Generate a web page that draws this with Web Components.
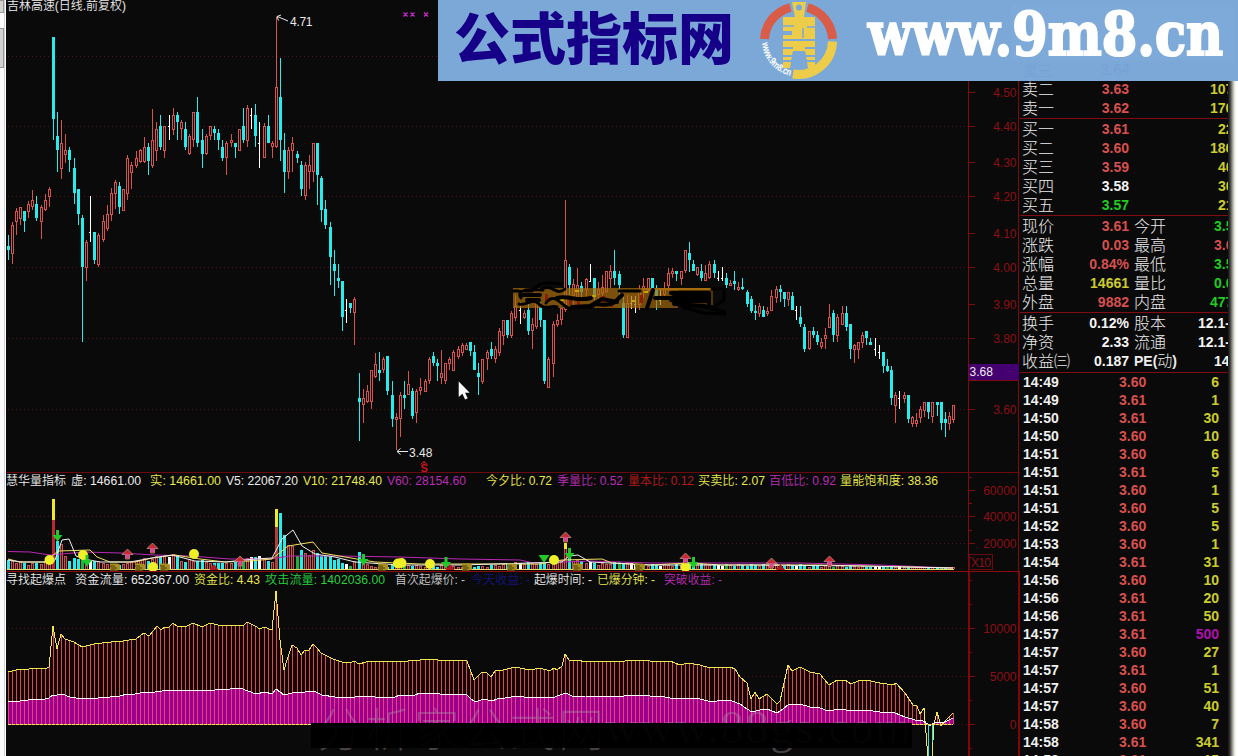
<!DOCTYPE html>
<html lang="zh">
<head>
<meta charset="utf-8">
<title>吉林高速</title>
<style>
    html, body {
        margin: 0;
        background: #0a0a0a;
        overflow: hidden;
    }
</style>
</head>
<body>
<stock-app></stock-app>

<script>
const CJK = '"Liberation Sans", "Noto Sans CJK SC", sans-serif'

// one line of text, squeezed or stretched to the width attribute
customElements.define('fit-text',

    class extends HTMLElement {

        constructor() {
            super()
            this.attachShadow({ mode: 'open' })
        }

        connectedCallback () {
            const w = this.getAttribute('w')
            const gap = this.getAttribute('gap') || 0
            this.shadowRoot.innerHTML = `
                <style>
                    :host { display: block; flex: none; width: ${w}px; height: 16px; margin-left: ${gap}px; }
                    svg { display: block; overflow: visible; }
                    text { font: 350 12px ${CJK}; fill: currentColor; }
                </style>
                <svg width="${w}" height="16">
                    <text x="0" y="12" textLength="${w}" lengthAdjust="spacingAndGlyphs">${this.textContent}</text>
                </svg>
            `
        }
    })

// kind, x, high, body top, body bottom, low
const CANDLES = `
c 8 235 246 250 260;r 12 222 225 254 264;r 16 208 211 222 235;r 20 207 207 219 225;c 24 211 211 221 232;r 28 201 204 212 218
r 32 190 200 207 210;c 36 196 204 218 221;r 41 205 207 222 239;r 45 194 200 210 211;r 49 187 189 197 207;c 53 37 37 119 140
c 57 112 136 150 172;r 61 120 143 169 179;r 65 134 150 155 163;c 69 147 150 160 172;c 74 158 168 193 204;c 78 189 189 214 225
c 82 215 218 267 342;r 86 240 242 268 281;w 90 196 232 232 242;c 94 232 232 260 264;r 98 233 235 265 267;r 103 215 221 240 242
r 107 205 214 229 231;r 111 188 193 215 221;r 115 180 182 194 209;c 119 182 186 207 214;r 123 189 189 211 211;r 127 155 158 194 200
r 131 162 165 173 189;r 136 151 158 166 168;r 140 149 150 162 163;r 144 137 147 162 163;c 148 143 147 161 175;r 152 109 140 166 168
r 156 122 129 151 161;c 160 115 126 147 150;r 164 126 126 151 158;w 169 115 126 126 140;r 173 108 115 130 135;c 177 112 115 122 140
r 181 120 122 129 140;c 185 122 129 147 150;r 189 134 136 154 155;r 193 112 112 140 147;c 197 97 112 143 147;c 202 129 140 154 168
r 206 134 136 154 155;r 210 126 126 136 140;c 214 126 129 133 140;c 218 129 133 140 150;c 222 140 147 158 161;r 226 141 143 158 175
r 231 134 140 143 147;c 235 143 143 147 158;r 239 129 129 151 151;c 243 108 126 140 143;r 247 105 108 141 147;w 251 108 115 115 129
c 255 104 115 136 147;w 259 122 143 143 168;r 264 123 126 158 158;c 268 115 126 143 143;r 272 141 143 147 158;r 276 17 87 147 148
c 280 58 97 140 161;c 284 133 150 172 193;r 288 147 150 172 179;r 292 137 143 151 172;c 297 151 154 158 163;c 301 161 165 189 196
r 305 162 165 196 200;r 309 155 165 172 189;r 313 143 143 172 182;c 317 143 143 175 205;c 321 176 178 210 222;c 325 200 209 225 229
c 330 222 227 257 285;c 334 250 264 271 296;c 338 264 278 281 288;c 342 281 281 317 331;w 346 299 310 310 323;c 350 303 303 308 313
r 354 297 299 313 345;c 359 373 398 402 441;r 363 389 398 405 423;r 367 385 391 402 403;r 371 370 370 402 409;r 375 353 364 377 378
c 379 352 370 373 381;r 383 357 359 370 373;c 387 356 356 391 395;c 392 381 395 419 427;r 396 413 417 420 450;r 400 392 395 419 437
c 404 381 395 398 409;r 408 371 384 395 395;c 412 388 391 416 419;r 416 389 391 413 423;r 420 378 387 391 395;r 425 379 381 392 392
r 429 357 359 381 384;c 433 352 356 363 366;c 437 359 363 366 381;r 441 350 373 378 384;r 445 363 363 381 384;r 449 357 359 364 370
r 453 350 352 371 371;r 458 346 349 357 359;r 462 343 345 353 356;r 466 343 345 350 350;c 470 342 342 351 356;c 474 345 352 370 370
c 478 363 373 377 395;r 482 359 359 382 384;r 487 350 352 359 370;c 491 342 349 356 359;r 495 346 349 359 363;r 499 328 331 353 356
r 503 320 320 336 345;c 507 320 320 335 338;r 511 311 313 336 338;r 515 295 306 318 321;w 520 302 310 310 324;r 524 310 313 318 319
c 528 304 310 331 335;r 532 318 324 331 349;r 536 302 302 327 329;c 540 302 305 320 327;c 544 320 320 381 384;r 548 357 359 388 388
r 553 321 324 364 377;r 557 314 320 325 327;r 561 308 308 320 325;r 565 200 260 310 312;c 569 264 267 285 295;r 573 279 284 296 305
r 577 268 285 300 305;c 581 282 286 292 298;r 586 278 279 290 300;w 590 264 281 281 282;c 594 278 278 297 300;r 598 282 289 295 300
r 602 275 287 294 298;r 606 271 271 292 293;r 610 265 271 279 288;c 614 250 271 278 285;c 619 271 274 285 295;c 623 297 303 335 338
r 627 295 303 338 338;w 631 296 303 303 309;w 635 296 304 304 313;r 639 285 290 305 310;r 643 278 286 290 298;r 648 278 278 291 292
c 652 278 278 290 290;c 656 285 290 300 310;w 660 290 300 300 305;r 664 282 289 295 300;r 668 268 273 286 291;r 672 268 271 274 278
c 676 271 271 274 281;r 681 271 271 279 285;r 685 250 250 271 273;c 689 242 253 260 272;c 693 260 264 271 271;r 697 267 267 275 276
c 701 264 271 278 281;r 705 265 273 281 281;r 709 261 264 278 279;c 714 260 264 273 278;w 718 271 278 278 281;w 722 267 278 278 281
c 726 273 278 285 288;r 730 280 283 286 286;c 734 271 281 284 290;r 738 282 287 290 291;c 742 278 287 289 290;c 747 290 292 304 307
c 751 296 299 311 313;c 755 305 311 313 320;r 759 303 306 314 317;c 763 306 310 317 317;r 767 307 311 314 316;r 771 290 296 311 311
r 776 286 289 298 303;c 780 285 289 292 302;c 784 292 292 299 307;r 788 292 292 300 306;c 792 292 296 310 310;w 796 306 310 310 320
c 800 306 317 324 327;c 804 324 327 349 352;r 809 331 331 349 350;c 813 327 331 335 338;c 817 331 335 342 345;r 821 338 342 347 349
r 825 328 335 339 349;r 829 304 317 328 328;c 833 310 313 335 342;r 837 314 317 336 342;r 842 306 313 325 325;c 846 306 313 327 331
c 850 324 324 349 359;r 854 344 345 350 363;r 858 342 342 350 359;r 862 332 335 343 348;c 866 331 331 338 345;c 870 338 342 345 345
w 875 338 349 349 356;w 879 345 352 352 359;c 883 352 352 366 373;c 887 359 366 371 372;c 891 366 370 398 405;r 895 392 395 406 423
w 899 391 398 398 409;r 904 392 395 399 403;c 908 395 395 419 423;r 912 416 417 424 427;r 916 413 420 424 427;r 920 406 409 418 423
r 924 402 402 411 417;c 928 402 402 412 419;r 932 402 402 417 423;c 937 402 402 405 416;c 941 402 402 423 430;c 945 412 419 423 437
r 949 412 416 424 430;r 953 405 405 420 423`
    .trim().split(/[;\n]/).map(s => {
        const [kind, ...n] = s.trim().split(' ')
        const [x, hi, top, bot, lo] = n.map(Number)
        return { kind, x, hi, top, bot, lo }
    })

const RED = '#d8524f'
const CYAN = '#28ecec'
const LINE = '#7c0a10'

const rect = (x, y, w, h, fill, extra = '') =>
    `<rect x="${x}" y="${y}" width="${w}" height="${h}" fill="${fill}" ${extra}/>`

const grid = ys => ys.map(y => `<path d="M8 ${y + .5}H968" stroke="#501216" stroke-dasharray="1 3"/>`).join('')

const axis = (labels) => labels.map(([t, y]) =>
    rect(968, y, 7, 1, LINE) + `<text class="ax" x="1016.5" y="${y + 5}" text-anchor="end">${t}</text>`).join('')

const poly = (pts, stroke) => `<polyline points="${pts}" fill="none" stroke="${stroke}"/>`

// value of a polyline "x,y x,y ..." at x
function at (pts, x) {
    const p = pts.trim().split(/\s+/).map(s => s.split(',').map(Number))
    for (let i = 1; i < p.length; i++) {
        if (x <= p[i][0]) {
            const [x0, y0] = p[i - 1]
            const [x1, y1] = p[i]
            return Math.round(y0 + (y1 - y0) * (x - x0) / (x1 - x0))
        }
    }
    return p[p.length - 1][1]
}

const chartStyle = `
    <style>
        :host { display: block; position: relative; }
        svg { display: block; overflow: visible; shape-rendering: crispEdges; }
        text { font: 350 12px ${CJK}; }
        .ax { fill: #8c1016; }
        .soft { shape-rendering: auto; }
    </style>
`

customElements.define('price-chart',

    class extends HTMLElement {

        constructor() {
            super()
            this.attachShadow({ mode: 'open' }).innerHTML = `
                ${chartStyle}
                <svg width="1013" height="472" viewBox="6 0 1013 472">
                    ${grid([56, 126, 196, 267, 338, 409])}
                    ${rect(968, 0, 1, 472, LINE)}${rect(1018, 0, 1, 472, LINE)}
                    ${axis([['4.50', 92], ['4.40', 126], ['4.30', 162], ['4.20', 196], ['4.10', 233], ['4.00', 267], ['3.90', 304], ['3.80', 338], ['3.60', 409]])}
                    ${rect(969, 364, 50, 17, '#440070')}
                    ${rect(969, 380, 50, 1, LINE)}
                    <text x="969.500" y="376" fill="#eee">3.68</text>
                    ${CANDLES.map(this.candle).join('')}
                    <g class="soft" fill="none" stroke="#e8e8e8">
                        <path d="M277.500 16.500L288 21M281 15l-4 1.500l1.500 4"/>
                        <path d="M397 451.500H408M400.500 448.500l-3.500 3l3.500 3"/>
                    </g>
                    <text x="290" y="26" fill="#e8e8e8" textLength="22.500">4.71</text>
                    <text x="409" y="457" fill="#e8e8e8" textLength="23.500">3.48</text>
                    <text x="420.500" y="472" fill="#c8181c" style="font-weight:bold;font-size:11px">S</text>
                    <path class="soft" d="M420.500 464.500l3.500-3l3.500 3M424 461v3" stroke="#c8181c" fill="none"/>
                    <g class="soft" stroke="#c828c8" stroke-width="1.200" fill="none">
                        <path d="M403.500 12.500l4 4m0-4l-4 4M410.500 12.500l4 4m0-4l-4 4M424 12.500l4 4m0-4l-4 4"/>
                    </g>
                    ${this.smudge()}
                    <path class="soft" d="M458.700 381.500v15.500l3.700-3.300l2.700 5.800l2.600-1.200l-2.600-5.600h4.600z" fill="#f8f8f8"/>
                </svg>
                <slot></slot>
            `
        }

        candle ({ kind, x, hi, top, bot, lo }) {
            if (kind === 'w') {
                return rect(x, hi, 1, lo - hi, '#fff') + rect(x - 1, bot, 1, 1, '#fff')
            }
            if (kind === 'c') {
                return rect(x, hi, 1, lo - hi, CYAN) + rect(x - 1, top, 3, bot - top, CYAN)
            }
            return rect(x, hi, 1, top - hi, RED) + rect(x, bot, 1, lo - bot, RED) +
                `<rect x="${x - .5}" y="${top + .5}" width="2" height="${Math.max(bot - top - 1, 1)}" fill="#0a0a0a" stroke="${RED}"/>`
        }

        // ochre band with ink strokes over it
        smudge () {
            return `
                ${rect(513, 288, 129, 20, '#a86c0c', 'fill-opacity=".72"')}
                ${rect(642, 288, 36, 20, '#a86c0c', 'fill-opacity=".66"')}
                ${rect(678, 290, 35, 15, '#7a4a06', 'fill-opacity=".65"')}
                ${rect(642, 288, 72, 2, '#a86c0c')}
                ${[519, 532, 560, 575, 592, 631, 644, 662].map((x, i) => rect(x, 289 + i * 5 % 14, 4, 2, '#c8a800')).join('')}
                ${[545, 569, 577, 602, 610, 640].map((x, i) => rect(x, 294 + i * 3 % 7, 3, 8, '#8c1e04')).join('')}
                <g class="soft" fill="none" stroke="#000" stroke-linecap="round" stroke-linejoin="round">
                    <path stroke-width="3" d="M513 291h19l8-7c8-2 15-1 21 0M521 298c-6-10 12-9 22-8M519 304c9 2 14-8 21 1c4 5 12 0 17 2M540 290c12-8 16 7 25-1M546 303c10-14 18 9 27 5"/>
                    <path stroke-width="4" d="M523 295h17M527 300h12M557 298c12-3 19 4 34 0M572 307l18-1l12-7l15 3M592 307c4-7 12 2 23-5l7-7M647 308l6-18M655 298h18M671 293h38v12M674 304l30 2l20 6M671 300h34"/>
                    <path stroke-width="8" d="M674 299h33"/>
                    <path stroke-width="3" d="M619 291h21M712 289l12-1v12l-8 5M683 307l20 6l22 1"/>
                </g>`
        }
    })

const VOL = `8,561 20,562 30,564 49,562 50,562 61,544 65,556 69,561 74,558 82,559 86,556 90,561 98,561 103,563 119,565
    127,563 136,561 144,558 148,561 156,556 160,557 164,555 169,557 173,554 177,556 181,561 185,562 189,559 193,561
    202,560 210,563 231,563 240,559 247,558 259,556 264,559 272,562 276,520 280,513 284,535 288,545 292,546 297,556
    301,550 305,553 309,555 313,550 317,553 321,556 325,556 330,557 334,560 338,559 342,563 346,564 350,565 354,562
    359,552 363,562 367,565 380,567 395,565 430,566 474,567 500,565 515,563 540,563 560,562 565,548 569,552 573,560
    600,564 614,563 623,562 640,565 680,565 690,563 720,565 780,565 830,566 880,567 953,568`

customElements.define('volume-chart',

    class extends HTMLElement {

        constructor() {
            super()
            this.attachShadow({ mode: 'open' }).innerHTML = `
                ${chartStyle}
                <style>
                    :host { border-top: 1px solid #6a0a0e; }
                    .legend { height: 17px; display: flex; margin-bottom: -17px; }
                </style>
                <div class="legend"><slot></slot></div>
                <svg width="1013" height="98" viewBox="6 473 1013 98">
                    ${grid([516, 543])}
                    ${rect(968, 473, 1, 98, LINE)}${rect(1018, 473, 1, 98, LINE)}
                    ${axis([['60000', 490], ['40000', 516], ['20000', 543]])}
                    ${[477, 503, 530, 557].map(y => rect(968, y, 4, 1, LINE)).join('')}
                    <rect x="969.500" y="554.500" width="23" height="15" fill="none" stroke="#6a0a0e"/>
                    <text class="ax" x="971" y="566.500" textLength="20">X10</text>
                    ${CANDLES.map(this.bar).join('')}
                    ${rect(7, 569, 947, 1, '#e8e070')}
                    <g class="soft">
                        ${poly('8,551.500 30,552 50,555 85,552 120,553 155,555 190,556 230,559 270,559 290,556 340,556 400,557 460,559 520,560 533,563 590,561 650,563 720,563 800,563 880,565 953,568', '#b828b4')}
                        ${poly('8,559 20,562 45,562 58,551 90,550 97,557 110,562 135,562 152,558 175,555 200,559 225,562 250,561 272,559 288,546 313,542 322,553 345,557 375,562 420,564 470,564 540,564 562,560 602,559 612,563 650,565 690,563 720,565 820,565 953,568', '#f0e060')}
                        ${poly('8,560 20,562 48,562 55,560 62,540 69,539 76,556 84,559 100,562 130,562 152,558 172,555 195,561 225,562 255,559 272,558 282,539 293,530 302,546 315,554 335,557 355,562 400,565 460,565 530,563 562,562 569,556 578,555 590,562 650,565 760,565 860,566 953,568', '#f0f0f0')}
                        ${this.marks()}
                    </g>
                </svg>
            `
        }

        bar ({ kind, x }, i) {
            if (x === 53) return rect(52, 499, 3, 21, '#f0e828') + rect(52, 520, 3, 49, '#b82830')
            if (x === 276) return rect(275, 509, 3, 18, '#f0e828') + rect(275, 527, 3, 42, '#b83c38')
            if (x === 57) return rect(56, 541, 3, 28, CYAN)
            const y = Math.min(at(VOL, x) + (x > 60 && x < 345 ? 0 : i * 7 % 3 - 1), 567)
            if (kind === 'c') return rect(x - 1, y, 3, 569 - y, i % 13 === 5 ? '#20b040' : CYAN)
            if (kind === 'w') return rect(x - 1, y, 3, 569 - y, '#fff')
            return rect(x - 1, y, 3, 569 - y, '#c85450') + rect(x, y + 1, 1, 568 - y, '#481414')
        }

        marks () {
            const ball = (x, y) => `<circle cx="${x}" cy="${y}" r="5" fill="#f0f028"/>`
            const down = (x, y) => `<path d="M${x - 1.500} ${y - 6}h3v5h3.500l-5 6.500l-5-6.500h3.500z" fill="#20c828"/>`
            const up = (x, y) => `<path d="M${x} ${y - 5}l5.500 5.500h-3.500v4.500h-4v-4.500h-3.500z" fill="#c82830" stroke="#b89080" stroke-width=".8"/>` + rect(x - 1.500, y, 3, 4, '#e040a0')
            const peak = (x, y) => `<path d="M${x} ${y - 4}l4.500 6h-9z" fill="#b01820"/>`
            const hand = (x, y) => `<path d="M${x - 5} ${y - 3.500}h7l3 1v5l-3 1h-7z" fill="#a89020"/><path d="M${x - 5} ${y - 1}h5M${x - 4} ${y + 1}h6M${x - 4} ${y + 3}h4" stroke="#4a3a08"/>`
            return [
                rect(564, 543, 3, 6, '#f0e828'),
                ...[[115, 567], [140, 567], [165, 567], [383, 567], [467, 567], [512, 567], [578, 567], [640, 567]].map(p => hand(...p)),
                ...[[49.5, 560], [83, 555], [153, 567], [194, 554], [398, 563.5], [401.5, 563], [430, 564], [554, 560], [685.500, 567]].map(p => ball(...p)),
                ...[[57.5, 536], [87, 561], [363.5, 560], [446, 563], [569.5, 554], [693.500, 563]].map(p => down(...p)),
                ...[[127.5, 554], [152.5, 548], [240, 561], [565.5, 537], [685.5, 558], [771.5, 563], [829.500, 561]].map(p => up(...p)),
                ...[[214, 568], [450, 568], [780.5, 568]].map(p => peak(...p)),
                '<path d="M538.500 555h11l-5.500 8z" fill="#20c828"/>'
            ].join('')
        }
    })

const FLOW = `8,672 20,669 26,670 32,668 45,669 49,667 53,626 57,649 61,634 65,639 74,642 82,647 94,644 102,643 111,642
    123,641 136,639 144,633 149,636 157,626 161,630 165,627 169,627 173,623 177,626 185,627 193,623 202,627 210,623
    218,625 226,625 243,626 247,622 255,626 260,629 264,627 272,630 276,591 280,640 284,670 288,657 292,645 297,648
    301,655 305,650 309,650 313,644 317,648 321,653 333,659 342,662 350,663 354,661 359,664 366,662 375,661 388,661
    395,662 408,661 420,660 430,659 445,661 455,660 467,661 474,680 482,672 487,673 491,677 495,671 503,670 515,667
    530,670 540,668 550,671 554,668 557,670 562,666 565,654 569,660 577,660 586,662 598,661 606,661 618,662 632,660
    643,660 650,661 660,662 670,661 680,665 688,663 700,665 710,668 722,667 730,667 735,669 740,677 747,683 751,699
    755,692 759,699 767,694 777,704 780,701 788,665 792,671 800,667 810,672 820,674 829,685 837,680 845,680 851,684
    858,681 866,680 880,683 893,685 896,683 905,693 913,705 917,706 920,714 924,708 928,758 932,756 934,724 937,712
    941,726 946,720 953,713`
const BASE = `8,702 20,701 28,700 45,699 49,698 53,695 57,695 62,694 70,697 82,699 98,698 110,697 120,696 127,694
    135,694 145,692 155,692 170,690 185,691 200,690 215,690 230,689 240,688 248,691 256,694 265,692 272,694 276,689
    284,695 292,693 305,692 314,691 322,695 335,697 355,697 366,696 375,697 395,697 400,695 415,695 420,693 440,694
    466,694 470,698 475,702 484,699 492,701 497,699 505,698 518,696 530,698 542,697 552,698 560,695 566,693 572,696
    585,696 620,697 628,695 650,696 665,697 675,699 688,698 700,699 712,702 722,700 732,701 740,704 747,709 752,712
    760,710 767,709 777,713 783,709 789,704 800,704 810,707 820,708 828,711 840,709 852,711 865,710 880,712 895,713
    905,717 915,720 922,720 926,723 930,726 935,722 945,722 953,718`

customElements.define('flow-chart',

    class extends HTMLElement {

        constructor() {
            super()
            const mark = (fill) => `
                <g fill="${fill}">
                    <text class="wm" x="317" y="746" textLength="287">分析家公式网</text>
                    <text class="wm" x="605" y="743" textLength="306">www.88gs.com</text>
                </g>`
            this.attachShadow({ mode: 'open' }).innerHTML = `
                ${chartStyle}
                <style>
                    :host { border-top: 1px solid #8c0a10; }
                    .legend { height: 17px; display: flex; margin-bottom: -17px; }
                    .wm { font: 300 46px "Liberation Serif", "Noto Sans CJK SC", serif; }
                </style>
                <div class="legend"><slot></slot></div>
                <svg width="1013" height="184" viewBox="6 572 1013 184">
                    ${grid([628, 676])}
                    <path d="M954 724.500H968" stroke="#501216" stroke-dasharray="1 3"/>
                    ${rect(968, 572, 2, 184, '#800608')}${rect(1018, 572, 2, 184, '#800608')}
                    ${axis([['10000', 628], ['5000', 676], ['0', 724]])}
                    ${[580, 604, 652, 700, 748].map(y => rect(968, y, 4, 1, LINE)).join('')}
                    <polygon points="8,724 ${FLOW.replace(/928,758 932,756 934,724/, '926,724 934,724')} 953,724" fill="#160303"/>
                    <polygon points="8,724 ${BASE} 953,724" fill="#9a008c"/>
                    ${CANDLES.map(this.stem).join('')}
                    ${poly(FLOW, '#f0e850')}
                    ${poly(BASE, '#fff')}
                    <path d="M8 724.500H953" stroke="#f05070"/>
                    <path d="M8 724.500H953" stroke="#f0e850" stroke-dasharray="3 1"/>
                    <path d="M928.500 725V756M932.500 725V742" stroke="${CYAN}"/>
                    <g class="soft">${mark('rgba(170,150,170,.38)')}</g>
                    ${rect(311, 723, 601, 25, '#000')}
                    <g class="soft">${mark('rgba(130,130,130,.03)')}</g>
                </svg>
            `
        }

        stem ({ x }) {
            const y = at(FLOW, x)
            const b = at(BASE, x)
            if (y >= 724) return ''
            return rect(x, y, 1, Math.max(b - y, 0), '#cc504e') + rect(x, b, 1, Math.max(724 - b, 0), '#ec3c84')
        }
    })

customElements.define('quote-row',

    class extends HTMLElement {

        constructor() {
            super()
            this.attachShadow({ mode: 'open' })
        }

        connectedCallback () {
            const [a, v, color, b = '', w = '', wcolor = '', start = 1134] = this.getAttribute('data').split('|')
            this.shadowRoot.innerHTML = `
                <style>
                    :host {
                        display: grid;
                        grid-template-columns: 48px 59px 5px auto 1fr;
                        grid-template-rows: 19px;
                        height: 19px;
                        align-items: start;
                        padding-left: 2px;
                        white-space: nowrap;
                        font: 300 16px/17px "Noto Sans CJK SC", sans-serif;
                        color: #ececec;
                    }
                    b { font: bold 14px/18px "Liberation Sans", sans-serif; text-align: right; }
                    .v { color: ${color}; }
                    .w { color: ${wcolor}; grid-row: 1; grid-column: 4 / 6; text-align: left; padding-left: ${start - 1134}px; }
                    .b { grid-row: 1; grid-column: 4; width: 43px; }
                    .pe { font: bold 14px/17px "Liberation Sans", sans-serif; height: 17px; }
                    .pe i { font: 300 15px/15px "Noto Sans CJK SC", sans-serif; }
                </style>
                <span>${a}</span><b class="v">${v}</b>
                <span class="b ${b[0] === 'P' ? 'pe' : ''}">${b.replace('动', '<i>动</i>')}</span><b class="w">${w}</b>
            `
        }
    })

customElements.define('trade-row',

    class extends HTMLElement {

        constructor() {
            super()
            this.attachShadow({ mode: 'open' }).innerHTML = `
                <style>
                    :host {
                        display: grid;
                        grid-template-columns: 96px 40px 60px;
                        height: 18px;
                        padding-left: 3px;
                        font: bold 14px/18px "Liberation Sans", sans-serif;
                        color: #f0f0f0;
                    }
                    .p { color: #d8504e; }
                    .n { color: #cccc2c; text-align: right; }
                    :host([big]) .n { color: #b010b0; }
                </style>
                <slot name="t"></slot>
                <span class="p"><slot name="p"></slot></span>
                <span class="n"><slot name="n"></slot></span>
            `
        }
    })

const R = '#d8504e', G = '#20cc20', Y = '#cccc2c', W = '#f4f4f4'
const QUOTES = [
    [`卖二|3.63|${R}||107|${Y}|1210`, `卖一|3.62|${R}||176|${Y}|1210`],
    [`买一|3.61|${R}||22|${Y}|1218`, `买二|3.60|${R}||186|${Y}|1210`, `买三|3.59|${R}||40|${Y}|1218`,
        `买四|3.58|${W}||30|${Y}|1218`, `买五|3.57|${G}||21|${Y}|1218`],
    [`现价|3.61|${R}|今开|3.58|${G}|1214`, `涨跌|0.03|${R}|最高|3.63|${R}|1214`, `涨幅|0.84%|${R}|最低|3.56|${G}|1214`,
        `总量|14661|${Y}|量比|0.66|${G}|1214`, `外盘|9882|${R}|内盘|4779|${G}|1210`],
    [`换手|0.12%|${W}|股本|12.1-|${W}|1198`, `净资|2.33|${W}|流通|12.1-|${W}|1198`, `收益㈢|0.187|${W}|PE(动)|14|${W}|1214`]
]
const TRADES = `14:49 3.60 6,14:49 3.61 1,14:50 3.61 30,14:50 3.60 10,14:51 3.60 6,14:51 3.61 5,14:51 3.60 1,14:51 3.60 5,
14:52 3.60 5,14:53 3.60 1,14:54 3.61 31,14:56 3.60 10,14:56 3.61 20,14:56 3.61 50,14:57 3.61 500,14:57 3.60 27,14:57 3.61 1,
14:57 3.60 51,14:57 3.60 40,14:58 3.60 7,14:58 3.61 341,14:58 3.61 15`.split(',').map(s => s.trim().split(' '))

customElements.define('quote-panel',

    class extends HTMLElement {

        constructor() {
            super()
            this.attachShadow({ mode: 'open' }).innerHTML = `
                <style>
                    :host { display: block; overflow: hidden; padding-top: 80px; box-sizing: border-box; }
                    section { border-bottom: 1px solid #820c12; padding-top: 1px; }
                    section:first-of-type { padding: 0; }
                    section:last-of-type { padding-bottom: 1px; }
                </style>
                ${QUOTES.map(g => `<section>${g.map(d => `<quote-row data="${d}"></quote-row>`).join('')}</section>`).join('')}
                ${TRADES.map(([t, p, n]) => `
                    <trade-row ${n === '500' ? 'big' : ''}><span slot="t">${t}</span><span slot="p">${p}</span><span slot="n">${n}</span></trade-row>
                `).join('')}
            `
        }
    })

customElements.define('site-banner',

    class extends HTMLElement {

        constructor() {
            super()
            this.attachShadow({ mode: 'open' }).innerHTML = `
                <style>
                    :host { display: block; background: #7ca8d8; }
                    svg { display: block; }
                    .name { font: 900 56px "Noto Sans CJK SC", sans-serif; fill: #160088; }
                    .url { font: bold 60px "DejaVu Serif", serif; fill: #fff; stroke: #fff; stroke-width: 2.2; }
                    .ring { font: bold 10px "Liberation Sans", sans-serif; fill: #fff; }
                </style>
                <svg width="800" height="81" viewBox="438 0 800 81">
                    <rect x="1011" y="5" width="223" height="56" fill="#80acdc" opacity=".5"/>
                    <text class="name" x="454" y="58.500" textLength="280">公式指标网</text>
                    <g fill="none" stroke-width="9">
                        <path d="M764.500 39A34.500 34.500 0 0 1 790.500 7.500M807.500 7.500A34.500 34.500 0 0 1 832.500 39" stroke="#d85c48"/>
                        <path d="M832.500 41.500A34 34 0 0 1 793 74" stroke="#eccc48"/>
                    </g>
                    <path fill="#eccc48" d="M792 2h14l-2 15h11v22h-32v-4h9v-4h-9v-14h12z
                        M783 41h32v6h-10v2h10v6h-9l-1-4h-12l-1 4h-9v-6h10v-2h-10z
                        M783 57h9l-1 3h-8zM806 57h9v3h-8zM783 62h8l-1 6h-7zM807 62h8v6h-7z"/>
                    <path d="M795 51h8l4 17h-16z" fill="#7ca8d8"/>
                    <path d="M803 28v10M783 26h11M807 27h8" stroke="#7ca8d8" stroke-width="1.500"/>
                    <circle cx="799" cy="7.500" r="3" fill="#7ca8d8"/>
                    <path id="arc" d="M762 43A37 37 0 0 0 791 76" fill="none"/>
                    <text class="ring" textLength="46" lengthAdjust="spacingAndGlyphs"><textPath href="#arc">www.9m8.cn</textPath></text>
                    <text class="url" x="868" y="54.500" textLength="355" lengthAdjust="spacingAndGlyphs">www.9m8.cn</text>
                    <g fill="#6c98c8" opacity=".35" font-family="Noto Sans CJK SC, sans-serif" font-size="15">
                        <text x="1022" y="76">卖三</text><text x="1101" y="75">3.64</text>
                    </g>
                </svg>
            `
        }
    })

customElements.define('stock-app',

    class extends HTMLElement {

        constructor() {
            super()
            const items = list => list.map(([t, w, gap, c]) => `<fit-text w="${w}" gap="${gap}" style="color:${c}">${t}</fit-text>`).join('')
            const yellow = '#e8e850', magenta = '#b82cb4', white = '#ececec'
            this.attachShadow({ mode: 'open' }).innerHTML = `
                <style>
                    :host {
                        position: relative;
                        display: grid;
                        grid-template-columns: 6px 1014px 208px 10px;
                        width: 1238px;
                        height: 756px;
                        overflow: hidden;
                        background: #0a0a0a;
                    }
                    .rail { background: linear-gradient(90deg, #fafafc 4px, #d0d0d4 4px 5px, #fff 5px); }
                    .rail i { display: block; width: 4px; box-sizing: border-box; background: #d4d2d0; border: 1px solid #9a9894; border-left: 0; }
                    .rail i + i { margin-top: 15px; height: 40px; }
                    .rail i:first-child { height: 13px; }
                    .charts { display: grid; grid-template-rows: 472px 99px 185px; min-width: 0; }
                    .title { position: absolute; left: 1px; top: -2px; color: #ececec; }
                    .edge { background: linear-gradient(90deg, #101010, #3c3a3a 2px, #8c8c80 4px, #d8d8cc 6px, #fff 8px); }
                    site-banner { position: absolute; left: 438px; top: 0; width: 800px; height: 81px; }
                </style>
                <div class="rail"><i></i><i></i></div>
                <div class="charts">
                    <price-chart>
                        <fit-text class="title" w="119">吉林高速(日线.前复权)</fit-text>
                    </price-chart>
                    <volume-chart>${items([
                        ['慧华量指标', 60, 0, white], ['虚: 14661.00', 70, 5, white], ['实: 14661.00', 71, 9, yellow],
                        ['V5: 22067.20', 72, 5, white], ['V10: 21748.40', 79, 5, yellow], ['V60: 28154.60', 79, 5, magenta],
                        ['今夕比: 0.72', 66, 20, yellow], ['季量比: 0.52', 66, 5, magenta], ['量本比: 0.12', 66, 5, '#b81c1c'],
                        ['买卖比: 2.07', 67, 4, yellow], ['百低比: 0.92', 67, 4, magenta], ['量能饱和度: 38.36', 98, 4, yellow]
                    ])}</volume-chart>
                    <flow-chart>${items([
                        ['寻找起爆点', 60, 0, white], ['资金流量: 652367.00', 114, 9, white], ['资金比: 4.43', 66, 5, yellow],
                        ['攻击流量: 1402036.00', 120, 5, '#28d040'], ['首次起爆价: -', 70, 10, '#c8c8c8'], ['今天收益: -', 59, 6, '#14147c'],
                        ['起爆时间: -', 58, 4, white], ['已爆分钟: -', 58, 5, yellow], ['突破收益: -', 58, 9, magenta]
                    ])}</flow-chart>
                </div>
                <quote-panel></quote-panel>
                <div class="edge"></div>
                <site-banner></site-banner>
            `
        }
    })
</script>
</body>
</html>
